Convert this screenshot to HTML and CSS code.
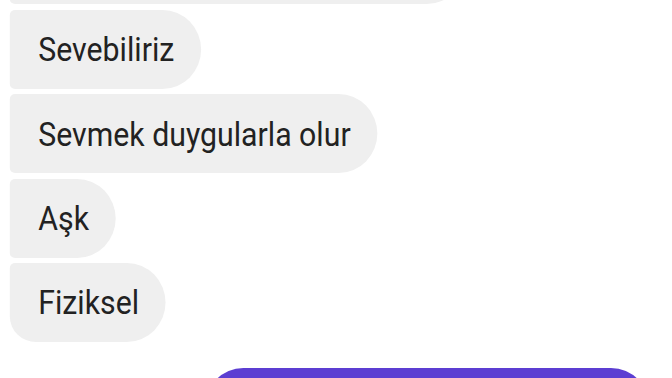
FILE: index.html
```html
<!DOCTYPE html>
<html lang="tr">
<head>
<meta charset="utf-8">
<title>Sohbet</title>
<link rel="stylesheet" href="styles.css">
</head>
<body>
<div class="thread">
  <div class="row in"><div class="bubble mid top-cut"></div></div>
  <div class="row in"><div class="bubble mid">Sevebiliriz</div></div>
  <div class="row in"><div class="bubble mid">Sevmek duygularla olur</div></div>
  <div class="row in"><div class="bubble mid">Aşk</div></div>
  <div class="row in"><div class="bubble last">Fiziksel</div></div>
  <div class="row out"><div class="bubble sent"></div></div>
</div>
</body>
</html>
```
FILE: styles.css
```css
html, body {
  margin: 0;
  padding: 0;
  background: #ffffff;
  overflow: hidden;
}
.thread {
  display: flex;
  flex-direction: column;
  width: 755px;
  box-sizing: border-box;
  padding: 0 25px 0 11px;
  margin-top: -80px;
  transform: scaleX(0.89);
  transform-origin: 0 0;
  font-family: Roboto, "Noto Sans", sans-serif;
}
.row {
  display: flex;
  margin-top: 5.4px;
}
.row.in { justify-content: flex-start; }
.row.out { justify-content: flex-end; margin-top: 26px; }
.bubble {
  height: 79px;
  display: flex;
  align-items: center;
  box-sizing: border-box;
  padding: 0 30px 0 32px;
  font-size: 34px;
  color: #222222;
  background: #efefef;
  white-space: nowrap;
}
.bubble.mid {
  border-radius: 6px 44px 44px 6px / 5px 40px 40px 5px;
}
.bubble.top-cut {
  width: 512px;
}
.bubble.last {
  border-radius: 6px 44px 44px 30px / 5px 40px 40px 26px;
}
.bubble.sent {
  width: 500px;
  background: #5c3ed2;
  border-radius: 44px / 40px;
}
```
